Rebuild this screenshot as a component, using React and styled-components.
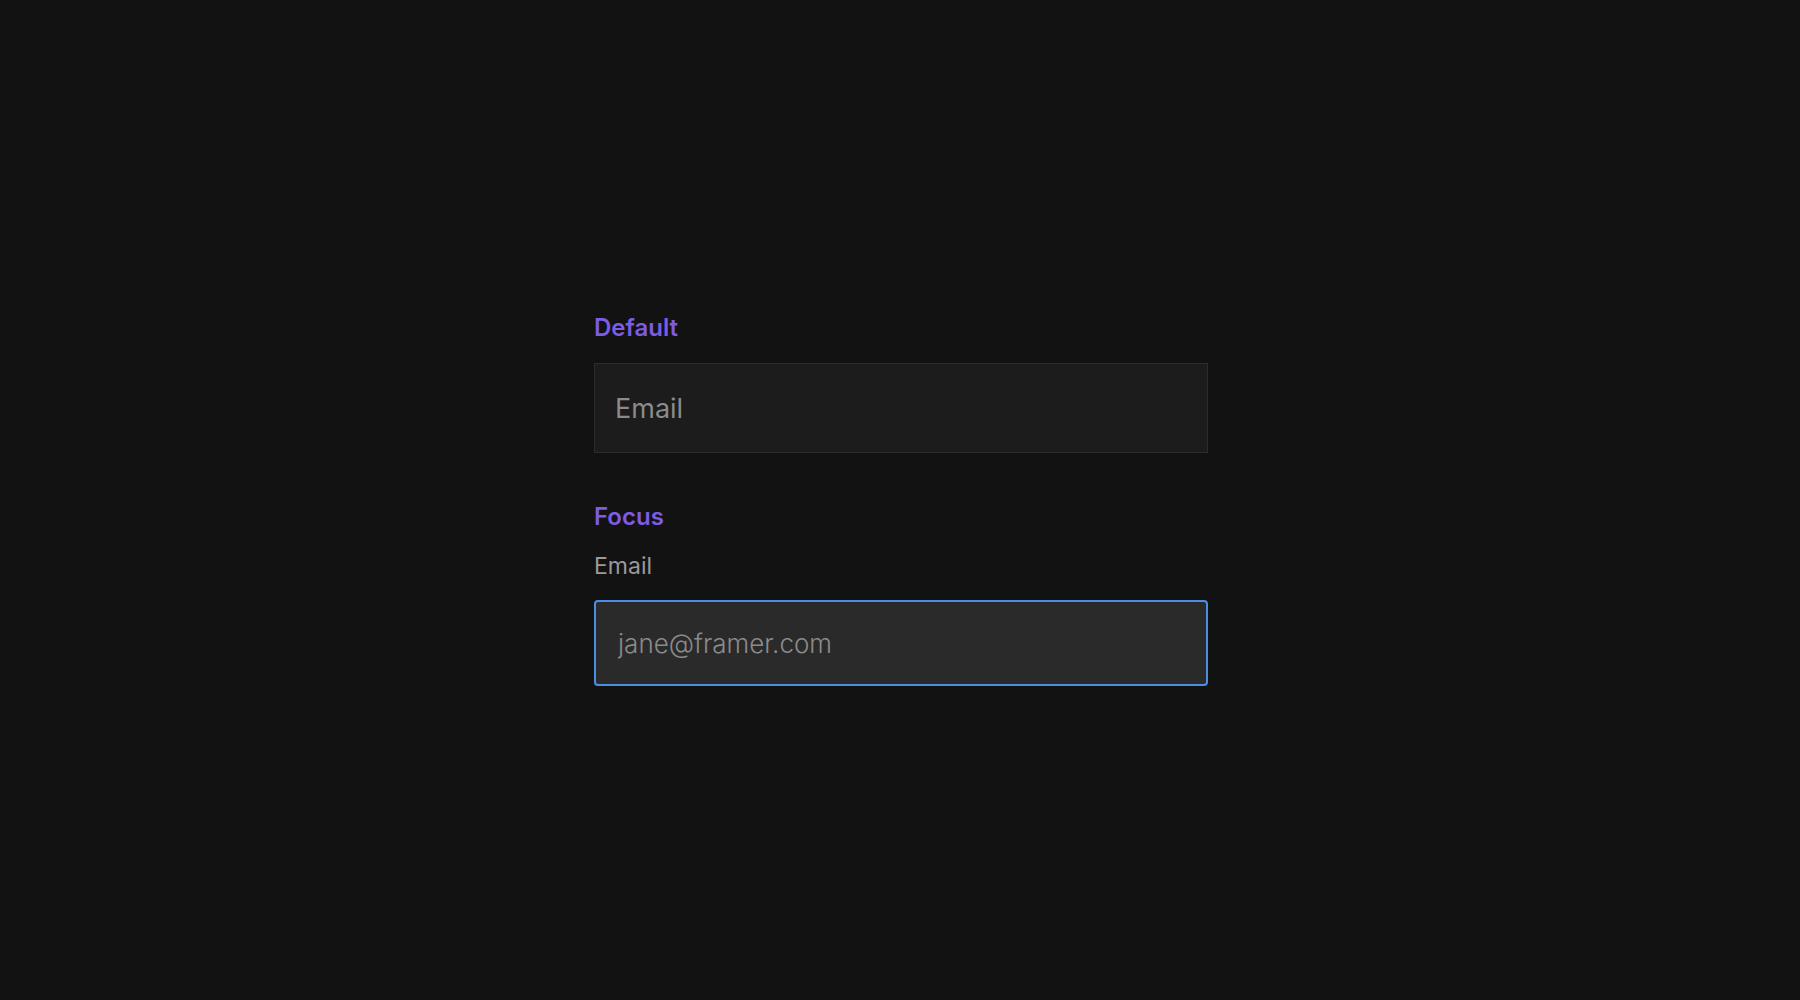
import React from 'react'
import styled, { createGlobalStyle } from 'styled-components'

const GlobalStyle = createGlobalStyle`
  html, body {
    margin: 0;
    padding: 0;
    height: 100%;
    background: #121212;
  }
  #root {
    height: 100%;
  }
`

const App = () => {
  return (
    <Page>
      <GlobalStyle />
      <Stack>
        <Section>
          <StateTitle>Default</StateTitle>
          <Field placeholder="Email" />
        </Section>
        <Section>
          <StateTitle>Focus</StateTitle>
          <FieldLabel>Email</FieldLabel>
          <Field focused placeholder="jane@framer.com" />
        </Section>
      </Stack>
    </Page>
  )
}

export default App

const Page = styled.div`
  min-height: 100vh;
  display: flex;
  align-items: center;
  justify-content: center;
  font-family: Inter, "Noto Sans", sans-serif;
`

const Stack = styled.div`
  width: 614px;
  display: flex;
  flex-direction: column;
  gap: 49px;
  margin: -1px 0 0 2px;
`

const Section = styled.div`
  display: flex;
  flex-direction: column;
  gap: 21px;
`

const StateTitle = styled.div`
  font-size: 24px;
  line-height: 29px;
  font-weight: 600;
  color: #7d5ce3;
`

const FieldLabel = styled.label`
  font-size: 23px;
  line-height: 26px;
  color: #9a9a9a;
  margin-top: 1px;
`

const Field = styled.input`
  box-sizing: border-box;
  width: 100%;
  height: ${(props) => (props.focused ? '86px' : '90px')};
  padding: 0 ${(props) => (props.focused ? '22px' : '20px')};
  font-family: inherit;
  font-size: ${(props) => (props.focused ? '26px' : '27px')};
  font-weight: ${(props) => (props.focused ? 300 : 400)};
  color: #dddddd;
  background: ${(props) => (props.focused ? '#2a2a2a' : '#1c1c1c')};
  border: ${(props) => (props.focused ? '2px solid #4a8fe2' : '1px solid #2c2c2c')};
  border-radius: ${(props) => (props.focused ? '4px' : '0')};
  outline: none;

  &::placeholder {
    color: #8b8b8b;
    opacity: 1;
  }
`
